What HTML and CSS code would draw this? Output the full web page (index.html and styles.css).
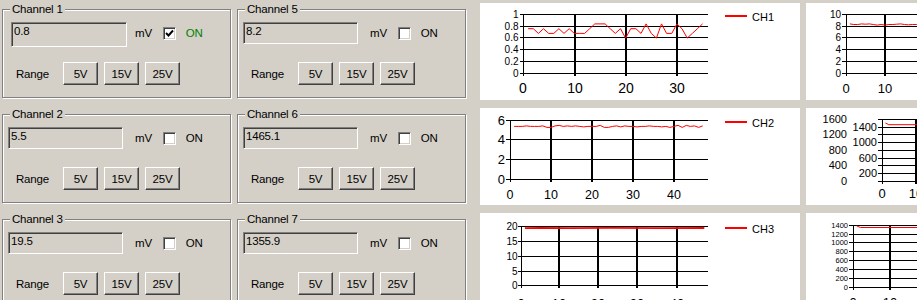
FILE: index.html
```html
<!DOCTYPE html>
<html>
<head>
<meta charset="utf-8">
<title>Channels</title>
<link rel="stylesheet" href="styles.css">
</head>
<body>
<div class="app">
  <div class="groups">
    <div class="group">
      <span class="group-title">Channel 1</span>
      <div class="value-row">
        <div class="textbox textbox-tall">0.8</div>
        <span class="unit">mV</span>
        <span class="check"><svg class="tick" width="9" height="9" viewBox="0 0 9 9"><path d="M1 4 L3.5 6.5 L8 1.5"/></svg></span>
        <span class="on on-active">ON</span>
      </div>
      <div class="range-row">
        <span class="range">Range</span>
        <button class="btn">5V</button><button class="btn">15V</button><button class="btn">25V</button>
      </div>
    </div>
    <div class="group">
      <span class="group-title">Channel 5</span>
      <div class="value-row">
        <div class="textbox">8.2</div>
        <span class="unit">mV</span>
        <span class="check"></span>
        <span class="on">ON</span>
      </div>
      <div class="range-row">
        <span class="range">Range</span>
        <button class="btn">5V</button><button class="btn">15V</button><button class="btn">25V</button>
      </div>
    </div>
    <div class="group">
      <span class="group-title">Channel 2</span>
      <div class="value-row">
        <div class="textbox">5.5</div>
        <span class="unit">mV</span>
        <span class="check"></span>
        <span class="on">ON</span>
      </div>
      <div class="range-row">
        <span class="range">Range</span>
        <button class="btn">5V</button><button class="btn">15V</button><button class="btn">25V</button>
      </div>
    </div>
    <div class="group">
      <span class="group-title">Channel 6</span>
      <div class="value-row">
        <div class="textbox">1465.1</div>
        <span class="unit">mV</span>
        <span class="check"></span>
        <span class="on">ON</span>
      </div>
      <div class="range-row">
        <span class="range">Range</span>
        <button class="btn">5V</button><button class="btn">15V</button><button class="btn">25V</button>
      </div>
    </div>
    <div class="group">
      <span class="group-title">Channel 3</span>
      <div class="value-row">
        <div class="textbox">19.5</div>
        <span class="unit">mV</span>
        <span class="check"></span>
        <span class="on">ON</span>
      </div>
      <div class="range-row">
        <span class="range">Range</span>
        <button class="btn">5V</button><button class="btn">15V</button><button class="btn">25V</button>
      </div>
    </div>
    <div class="group">
      <span class="group-title">Channel 7</span>
      <div class="value-row">
        <div class="textbox">1355.9</div>
        <span class="unit">mV</span>
        <span class="check"></span>
        <span class="on">ON</span>
      </div>
      <div class="range-row">
        <span class="range">Range</span>
        <button class="btn">5V</button><button class="btn">15V</button><button class="btn">25V</button>
      </div>
    </div>
  </div>

  <div class="charts">
    <!-- CH1 -->
    <div class="chart">
      <svg width="320" height="97" viewBox="0 0 320 97">
        <path class="grid" d="M40 11.5H228M40 23.5H228M40 34.5H228M40 46.5H228M40 58.5H228M40 70.5H228M43.5 11V73"/>
        <path class="vgrid" d="M95 11V73M146 11V73M197 11V73"/>
        <g class="lab ylab fs10">
          <text x="38.5" y="15">1</text>
          <text x="38.5" y="27">0.8</text>
          <text x="38.5" y="38">0.6</text>
          <text x="38.5" y="50">0.4</text>
          <text x="38.5" y="62">0.2</text>
          <text x="38.5" y="74">0</text>
        </g>
        <g class="lab xlab fs14">
          <text x="43" y="90">0</text>
          <text x="95" y="90">10</text>
          <text x="146" y="90">20</text>
          <text x="197" y="90">30</text>
        </g>
        <polyline class="series" points="48.1,25.7 53.3,25.7 58.4,30.4 63.5,25.7 68.7,30.4 73.8,30.4 78.9,25.7 84,30.4 89.2,25.7 94.3,30.4 99.4,30.4 104.6,30.4 109.7,25.7 114.8,20.9 120,20.9 125.1,20.9 130.2,25.7 135.3,30.4 140.5,25.7 145.6,35.1 150.7,25.7 155.9,25.7 161,30.4 166.1,20.9 171.3,30.4 176.4,35.1 181.5,20.9 186.6,30.4 191.8,30.4 196.9,20.9 202,25.7 207.2,35.1 212.3,30.4 217.4,25.7 222.6,20.9"/>
        <path class="legend-line" d="M245 13H267"/>
        <text class="lab fs11" x="272" y="17.5">CH1</text>
      </svg>
    </div>
    <!-- CH5 -->
    <div class="chart">
      <svg width="320" height="97" viewBox="0 0 320 97">
        <path class="grid" d="M36 11.5H228M36 23.5H228M36 34.5H228M36 46.5H228M36 58.5H228M36 70.5H228M40.5 11V73"/>
        <path class="vgrid" d="M79 11V73M118 11V73M157 11V73M196 11V73"/>
        <g class="lab ylab fs10">
          <text x="35" y="15">10</text>
          <text x="35" y="27">8</text>
          <text x="35" y="38">6</text>
          <text x="35" y="50">4</text>
          <text x="35" y="62">2</text>
          <text x="35" y="74">0</text>
        </g>
        <g class="lab xlab fs13">
          <text x="40" y="90">0</text>
          <text x="79" y="90">10</text>
          <text x="118" y="90">20</text>
        </g>
        <polyline class="series" points="43.9,20.9 47.8,21.5 51.7,21.5 55.6,20.9 59.5,21.2 63.4,20.9 67.3,21.5 71.2,22.1 75.1,21.5 79,22.1 82.9,21.5 86.8,21.5 90.7,21.2 94.6,20.9 98.5,21.5 102.4,21.8 106.3,21.5 110.2,21.5 114.1,20.9 118,21.5 160,21.5"/>
      </svg>
    </div>
    <!-- CH2 -->
    <div class="chart">
      <svg width="320" height="97" viewBox="0 0 320 97">
        <path class="grid" d="M26 12.5H228M26 31.5H228M26 51.5H228M26 71.5H228M30.5 12V74"/>
        <path class="vgrid" d="M71 12V74M112 12V74M153 12V74M194 12V74"/>
        <g class="lab ylab fs13">
          <text x="25" y="16.5">6</text>
          <text x="25" y="35.5">4</text>
          <text x="25" y="55.5">2</text>
          <text x="25" y="75.5">0</text>
        </g>
        <g class="lab xlab fs12">
          <text x="30" y="91">0</text>
          <text x="71" y="91">10</text>
          <text x="112" y="91">20</text>
          <text x="153" y="91">30</text>
          <text x="194" y="91">40</text>
        </g>
        <polyline class="series" points="34.1,18.4 38.2,18.4 42.3,18.4 46.4,17.9 50.5,18.4 54.6,18.4 58.7,18.4 62.8,17.9 66.9,19.4 71,19.4 75.1,17.9 79.2,17.4 83.3,18.4 87.4,17.9 91.5,18.4 95.6,17.9 99.7,18.4 103.8,18.9 107.9,18.4 112,18.4 116.1,18.4 120.2,17.4 124.3,19.4 128.4,19.4 132.5,18.4 136.6,17.9 140.7,18.9 144.8,17.9 148.9,18.4 153,18.4 157.1,18.9 161.2,18.4 165.3,18.4 169.4,17.9 173.5,18.4 177.6,18.4 181.7,18.9 185.8,18.4 189.9,19.4 194,18.4 198.1,17.4 202.2,19.4 206.3,17.4 210.4,18.4 214.5,17.9 218.6,19.4 222.7,17.9"/>
        <path class="legend-line" d="M245 14H267"/>
        <text class="lab fs11" x="272" y="18.5">CH2</text>
      </svg>
    </div>
    <!-- CH6 -->
    <div class="chart">
      <svg width="320" height="97" viewBox="0 0 320 97">
        <path class="grid" d="M72 11.5H228M72 19.5H228M72 26.5H228M72 34.5H228M72 42.5H228M72 50.5H228M72 57.5H228M72 65.5H228M72 73.5H228M76.5 11V76"/>
        <path class="vgrid" d="M110 11V76M144 11V76"/>
        <g class="lab ylab fs11">
          <text x="41" y="15">1600</text>
          <text x="71" y="23">1400</text>
          <text x="41" y="30">1200</text>
          <text x="71" y="38">1000</text>
          <text x="41" y="46">800</text>
          <text x="71" y="54">600</text>
          <text x="41" y="61">400</text>
          <text x="71" y="69">200</text>
          <text x="41" y="77">0</text>
        </g>
        <g class="lab xlab fs13">
          <text x="76" y="90">0</text>
          <text x="110" y="90">10</text>
        </g>
        <polyline class="series" points="79.4,15 82.8,16.7 228,16.7"/>
      </svg>
    </div>
    <!-- CH3 -->
    <div class="chart">
      <svg width="320" height="97" viewBox="0 0 320 97">
        <path class="grid" d="M38 13.5H228M38 28.5H228M38 43.5H228M38 58.5H228M38 72.5H228M41.5 13V75"/>
        <path class="vgrid" d="M79 13V75M118 13V75M157 13V75M197 13V75"/>
        <g class="lab ylab fs10">
          <text x="37.5" y="17">20</text>
          <text x="37.5" y="32">15</text>
          <text x="37.5" y="47">10</text>
          <text x="37.5" y="62">5</text>
          <text x="37.5" y="76">0</text>
        </g>
        <g class="lab xlab fs13">
          <text x="41" y="95">0</text>
          <text x="79" y="95">10</text>
          <text x="118" y="95">20</text>
          <text x="157" y="95">30</text>
          <text x="197" y="95">40</text>
        </g>
        <polyline class="series series-thick" points="44.9,15.2 60,14.9 90,15.1 130,14.9 180,15.1 224.3,15"/>
        <path class="legend-line" d="M245 15H267"/>
        <text class="lab fs11" x="272" y="19.5">CH3</text>
      </svg>
    </div>
    <!-- CH7 -->
    <div class="chart">
      <svg width="320" height="97" viewBox="0 0 320 97">
        <path class="grid" d="M43 12.5H228M43 21.5H228M43 29.5H228M43 38.5H228M43 47.5H228M43 56.5H228M43 65.5H228M43 74.5H228M47.5 12V77"/>
        <path class="vgrid" d="M84 12V77M121 12V77"/>
        <g class="lab ylab fs7">
          <text x="42" y="15">1400</text>
          <text x="42" y="24">1200</text>
          <text x="42" y="32">1000</text>
          <text x="42" y="41">800</text>
          <text x="42" y="50">600</text>
          <text x="42" y="59">400</text>
          <text x="42" y="68">200</text>
          <text x="42" y="77">0</text>
        </g>
        <g class="lab xlab fs13">
          <text x="47" y="94">0</text>
          <text x="84" y="94">10</text>
          <text x="121" y="94">20</text>
        </g>
        <polyline class="series" points="50.7,12.9 54.4,14.5 228,14.5"/>
      </svg>
    </div>
  </div>
</div>
</body>
</html>
```

FILE: styles.css
```css
html, body {
  margin: 0;
  height: 100%;
  overflow: hidden;
}

body {
  background: #d4d0c8;
  font-family: "Liberation Sans", Arial, sans-serif;
  font-size: 11.5px;
  letter-spacing: -0.2px;
  color: #000;
}

.app {
  display: flex;
  align-items: flex-start;
}

/* ---------- group boxes ---------- */
.groups {
  flex: none;
  display: grid;
  grid-template-columns: 229px 229px;
  grid-auto-rows: 89px;
  column-gap: 6px;
  row-gap: 16px;
  padding: 9px 0 0 2px;
}

.group {
  position: relative;
  box-sizing: border-box;
  border: 1px solid #808080;
  box-shadow: inset 1px 1px 0 #fff, 1px 1px 0 #fff;
  padding: 12px 0 0 5px;
}

.group-title {
  position: absolute;
  top: -8px;
  left: 7px;
  padding: 0 2px;
  background: #d4d0c8;
  line-height: 14px;
}

.value-row {
  display: flex;
  align-items: center;
  height: 22px;
}

.textbox {
  box-sizing: border-box;
  width: 115px;
  height: 22px;
  border: 1px solid;
  border-color: #808080 #fff #fff #808080;
  box-shadow: inset 1px 1px 0 #404040, inset -1px -1px 0 #d4d0c8;
  padding: 1px 0 0 2px;
  line-height: 14px;
  background: #d4d0c8;
}

.textbox-tall {
  margin-left: 3px;
  margin-right: -4px;
  width: 116px;
  height: 25px;
  margin-bottom: -3px;
  align-self: flex-start;
}

.unit {
  margin-left: 12px;
}

.check {
  box-sizing: border-box;
  width: 13px;
  height: 13px;
  margin-left: 11px;
  border: 1px solid;
  border-color: #808080 #fff #fff #808080;
  box-shadow: inset 1px 1px 0 #404040, inset -1px -1px 0 #d4d0c8;
  background: #fff;
  display: flex;
  align-items: center;
  justify-content: center;
}

.tick {
  display: block;
}

.tick path {
  fill: none;
  stroke: #000;
  stroke-width: 1.9;
}

.on {
  margin-left: 10px;
}

.on-active {
  color: #008000;
}

.range-row {
  display: flex;
  align-items: center;
  margin-top: 18px;
}

.range {
  width: 47px;
  margin-left: 8px;
}

.btn {
  box-sizing: border-box;
  width: 35px;
  height: 23px;
  margin: 0 6px 0 0;
  padding: 0;
  font: inherit;
  letter-spacing: inherit;
  color: #000;
  background: #d4d0c8;
  border: 1px solid;
  border-color: #fff #404040 #404040 #fff;
  box-shadow: inset -1px -1px 0 #808080;
}

/* ---------- charts ---------- */
.charts {
  flex: none;
  display: grid;
  grid-template-columns: 320px 320px;
  grid-auto-rows: 97px;
  column-gap: 6px;
  row-gap: 8px;
  margin-left: 14px;
  padding-top: 3px;
}

.chart {
  background: #fff;
  overflow: hidden;
}

.chart svg {
  display: block;
}

.grid {
  fill: none;
  stroke: #000;
  stroke-width: 1;
  shape-rendering: crispEdges;
}

.vgrid {
  fill: none;
  stroke: #000;
  stroke-width: 2;
  shape-rendering: crispEdges;
}

.series {
  fill: none;
  stroke: #f00;
  stroke-width: 1;
  stroke-linejoin: round;
}

.series-thick {
  stroke-width: 1.8;
}

.legend-line {
  stroke: #f00;
  stroke-width: 2;
  shape-rendering: crispEdges;
}

.lab {
  font-family: "Liberation Sans", Arial, sans-serif;
  fill: #000;
  letter-spacing: 0;
}

.ylab {
  text-anchor: end;
}

.xlab {
  text-anchor: middle;
}

.fs7 { font-size: 7.5px; }
.fs10 { font-size: 10px; }
.fs11 { font-size: 11px; }
.fs12 { font-size: 12.5px; }
.fs13 { font-size: 13px; }
.fs14 { font-size: 14px; }
```
